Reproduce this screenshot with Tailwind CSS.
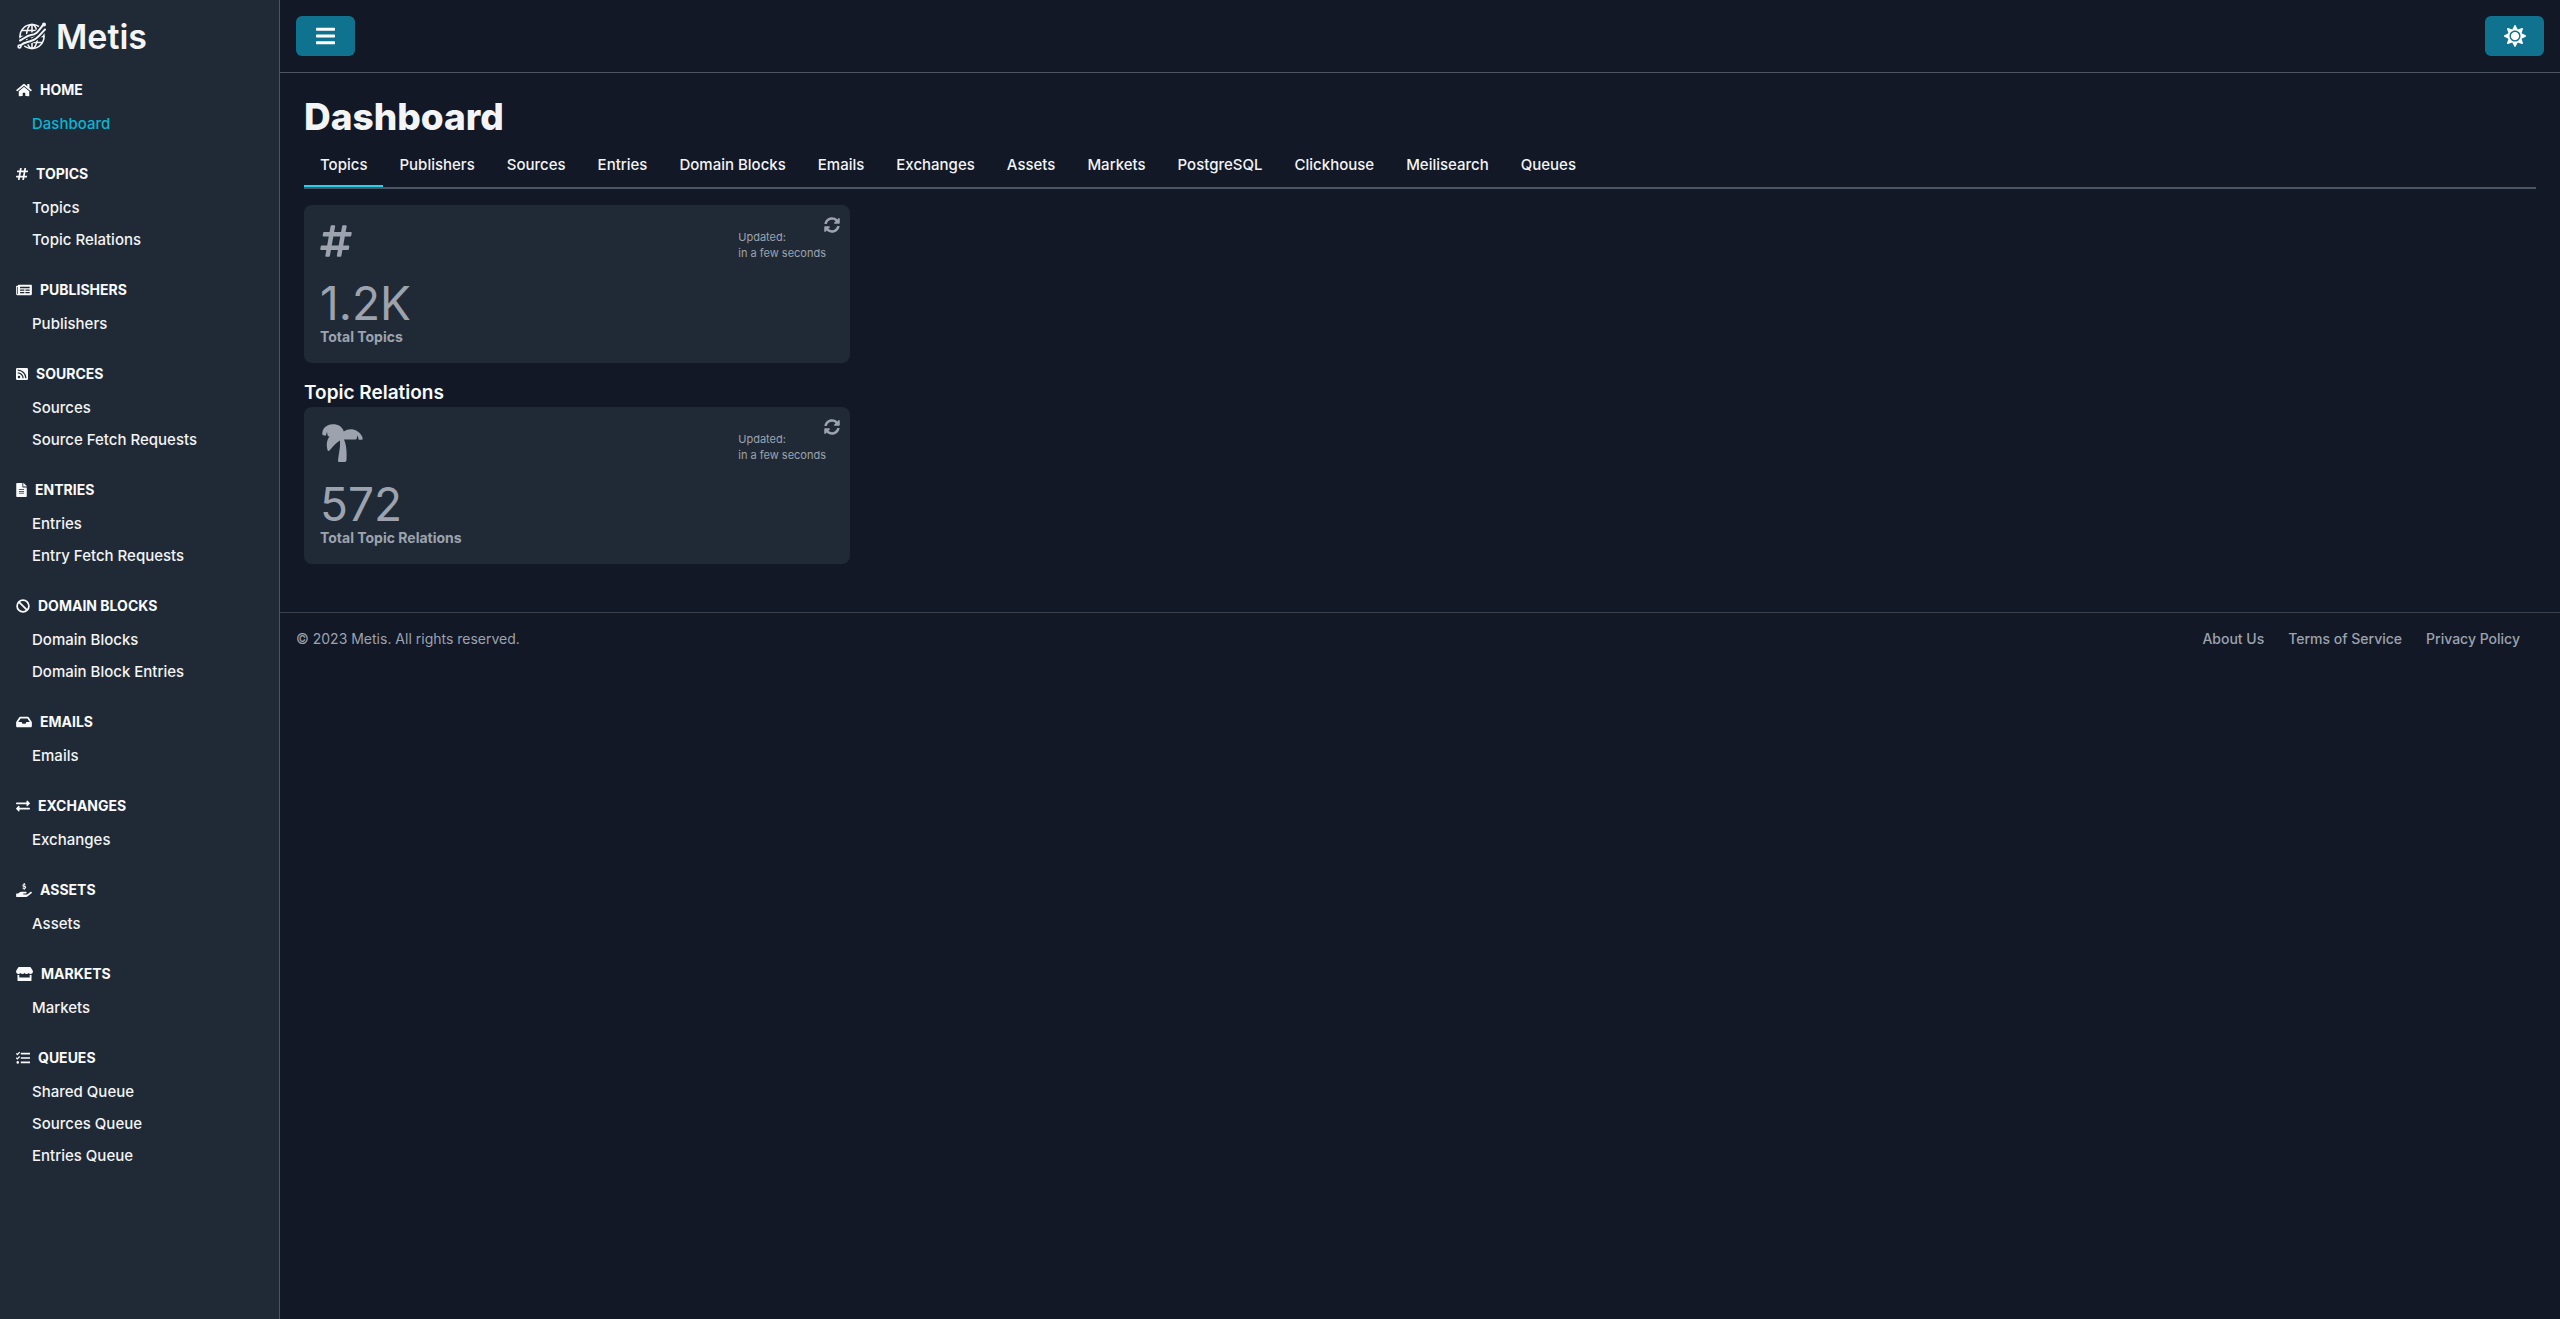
<!DOCTYPE html>
<html lang="en">
  <head>
    <meta charset="UTF-8">
    <meta name="viewport" content="width=device-width, initial-scale=1.0">
    <title>Metis - Dashboard</title>
    <script src="https://cdn.jsdelivr.net/npm/@tailwindcss/browser@4"></script>
  </head>
  <body class="flex min-h-screen bg-[#121826] font-['Inter',sans-serif] text-gray-100">
    <!-- Sidebar -->
    <aside class="w-70 shrink-0 border-r border-[#4b5563] bg-[#202a36] px-4 pt-3">
      <a href="#" class="flex h-12 items-center gap-2 text-[34px] font-semibold text-[#f3f4f6]">
        <svg class="h-7 w-8" viewBox="0 0 32 28" fill="none" stroke="currentColor" stroke-width="1.600" stroke-linecap="round" stroke-linejoin="round">
          <circle cx="16" cy="14.500" r="12"/>
          <ellipse cx="16" cy="14.500" rx="5.500" ry="12"/>
          <path d="M16 2.500V26.500M4 14.500H28M6 8.500H26M6 20.500H26"/>
          <!-- orbit bands, with a dark edge that cuts them out of the globe -->
          <path d="M4 19C8 15.500 11 13.500 15 13C21 12.500 23 8 27.500 2.500M4 24C8 20.500 12 20.500 16 18.500C21 17.500 24 12.500 29 7.500" stroke="#202a36" stroke-width="4.500"/>
          <path d="M4 18.500C8 16.500 11 13.500 15 13C21 12.500 23 8 27.500 2.500M4.500 23.500C8 20 12 20.500 16 18.500C21 17.500 24 12.500 29 7.500" stroke-width="2"/>
          <circle cx="28" cy="2.500" r="1.200" fill="currentColor"/>
          <circle cx="3.500" cy="24.500" r="1.400"/>
        </svg>
        <span>Metis</span>
      </a>

      <nav class="mt-5 flex flex-col gap-6">
        <section>
          <h2 class="flex h-5 items-center gap-2 text-sm font-bold text-gray-50">
            <svg class="h-3.5 w-4" viewBox="0 0 576 512" fill="currentColor"><path d="M280.370 148.260L96 300.110V464a16 16 0 0 0 16 16l112.060-.290a16 16 0 0 0 15.920-16V368a16 16 0 0 1 16-16h64a16 16 0 0 1 16 16v95.640a16 16 0 0 0 16 16.050L464 480a16 16 0 0 0 16-16V300L295.670 148.260a12.190 12.190 0 0 0-15.300 0zM571.600 251.470L488 182.560V44.050a12 12 0 0 0-12-12h-56a12 12 0 0 0-12 12v72.610L318.470 43a48 48 0 0 0-61 0L4.340 251.470a12 12 0 0 0-1.600 16.900l25.500 31A12 12 0 0 0 45.150 301l235.220-193.740a12.190 12.190 0 0 1 15.300 0L530.900 301a12 12 0 0 0 16.900-1.600l25.500-31a12 12 0 0 0-1.700-16.930z"/></svg>
            HOME
          </h2>
          <ul class="mt-2 pl-4 text-[15px] leading-8 font-medium">
            <li><a href="#" class="text-[#06b6d4]">Dashboard</a></li>
          </ul>
        </section>

        <section>
          <h2 class="flex h-5 items-center gap-2 text-sm font-bold text-gray-50">
            <svg class="h-3.5 w-3" viewBox="0 0 448 512" fill="currentColor"><path d="M440.667 182.109l7.143-40c1.313-7.355-4.342-14.109-11.813-14.109h-74.810l14.623-81.891C377.123 38.754 371.468 32 363.997 32h-40.632a12 12 0 0 0-11.813 9.891L296.175 128H197.540l14.623-81.891C213.477 38.754 207.822 32 200.350 32h-40.632a12 12 0 0 0-11.813 9.891L132.528 128H53.432a12 12 0 0 0-11.813 9.891l-7.143 40C33.163 185.246 38.818 192 46.289 192h74.810L98.242 320H19.146a12 12 0 0 0-11.813 9.891l-7.143 40C-1.123 377.246 4.532 384 12.003 384h74.810L72.190 465.891C70.877 473.246 76.532 480 84.003 480h40.632a12 12 0 0 0 11.813-9.891L151.826 384h98.634l-14.623 81.891C234.523 473.246 240.178 480 247.650 480h40.632a12 12 0 0 0 11.813-9.891L315.472 384h79.096a12 12 0 0 0 11.813-9.891l7.143-40c1.313-7.355-4.342-14.109-11.813-14.109h-74.810l22.857-128h79.096a12 12 0 0 0 11.813-9.891zM261.889 320h-98.634l22.857-128h98.634l-22.857 128z"/></svg>
            TOPICS
          </h2>
          <ul class="mt-2 pl-4 text-[15px] leading-8 font-medium">
            <li><a href="#">Topics</a></li>
            <li><a href="#">Topic Relations</a></li>
          </ul>
        </section>

        <section>
          <h2 class="flex h-5 items-center gap-2 text-sm font-bold text-gray-50">
            <svg class="h-3.5 w-4" viewBox="0 0 576 512" fill="currentColor" fill-rule="evenodd"><path d="M552 64H88a24 24 0 0 0-24 24v8H24a24 24 0 0 0-24 24v272a56 56 0 0 0 56 56h472a48 48 0 0 0 48-48V88a24 24 0 0 0-24-24zM40 400V144h24v256zM144 136H496V190H144zM144 236H300V280H144zM340 236H496V280H340zM144 330H300V374H144zM340 330H496V374H340z"/></svg>
            PUBLISHERS
          </h2>
          <ul class="mt-2 pl-4 text-[15px] leading-8 font-medium">
            <li><a href="#">Publishers</a></li>
          </ul>
        </section>

        <section>
          <h2 class="flex h-5 items-center gap-2 text-sm font-bold text-gray-50">
            <svg class="h-3.5 w-3" viewBox="0 0 448 512" fill="none" stroke-width="44">
              <rect y="32" width="448" height="448" rx="48" fill="currentColor"/>
              <circle cx="112" cy="368" r="46" fill="#202a36"/>
              <path d="M64 214A202 202 0 0 1 266 416M64 112A304 304 0 0 1 368 416" stroke="#202a36"/>
            </svg>
            SOURCES
          </h2>
          <ul class="mt-2 pl-4 text-[15px] leading-8 font-medium">
            <li><a href="#">Sources</a></li>
            <li><a href="#">Source Fetch Requests</a></li>
          </ul>
        </section>

        <section>
          <h2 class="flex h-5 items-center gap-2 text-sm font-bold text-gray-50">
            <svg class="h-3.5 w-[11px]" viewBox="0 0 384 512" fill="currentColor"><path d="M224 136V0H24C10.700 0 0 10.700 0 24v464c0 13.300 10.700 24 24 24h336c13.300 0 24-10.700 24-24V160H248c-13.200 0-24-10.800-24-24zm64 236c0 6.600-5.400 12-12 12H108c-6.600 0-12-5.400-12-12v-8c0-6.600 5.400-12 12-12h168c6.600 0 12 5.400 12 12v8zm0-64c0 6.600-5.400 12-12 12H108c-6.600 0-12-5.400-12-12v-8c0-6.600 5.400-12 12-12h168c6.600 0 12 5.400 12 12v8zm0-72v8c0 6.600-5.400 12-12 12H108c-6.600 0-12-5.400-12-12v-8c0-6.600 5.400-12 12-12h168c6.600 0 12 5.400 12 12zm96-114.100v6.100H256V0h6.100c6.400 0 12.500 2.500 17 7l97.900 98c4.500 4.500 7 10.600 7 16.900z"/></svg>
            ENTRIES
          </h2>
          <ul class="mt-2 pl-4 text-[15px] leading-8 font-medium">
            <li><a href="#">Entries</a></li>
            <li><a href="#">Entry Fetch Requests</a></li>
          </ul>
        </section>

        <section>
          <h2 class="flex h-5 items-center gap-2 text-sm font-bold text-gray-50">
            <svg class="size-3.5" viewBox="0 0 512 512" fill="none" stroke="currentColor" stroke-width="64"><circle cx="256" cy="256" r="216"/><path d="M103 103L409 409"/></svg>
            DOMAIN BLOCKS
          </h2>
          <ul class="mt-2 pl-4 text-[15px] leading-8 font-medium">
            <li><a href="#">Domain Blocks</a></li>
            <li><a href="#">Domain Block Entries</a></li>
          </ul>
        </section>

        <section>
          <h2 class="flex h-5 items-center gap-2 text-sm font-bold text-gray-50">
            <svg class="h-3.5 w-4" viewBox="0 0 576 512" fill="currentColor"><path d="M567.938 243.908L462.250 85.374A48.003 48.003 0 0 0 422.311 64H153.689a48 48 0 0 0-39.938 21.374L8.062 243.908A47.994 47.994 0 0 0 0 270.533V400c0 26.510 21.490 48 48 48h480c26.510 0 48-21.490 48-48V270.533a47.994 47.994 0 0 0-8.062-26.625zM162.252 128h251.497l85.333 128H376l-32 64H232l-32-64H76.918l85.334-128z"/></svg>
            EMAILS
          </h2>
          <ul class="mt-2 pl-4 text-[15px] leading-8 font-medium">
            <li><a href="#">Emails</a></li>
          </ul>
        </section>

        <section>
          <h2 class="flex h-5 items-center gap-2 text-sm font-bold text-gray-50">
            <svg class="size-3.5" viewBox="0 0 512 512" fill="currentColor"><path d="M0 168v-16c0-13.255 10.745-24 24-24h360V80c0-21.367 25.899-32.042 40.971-16.971l80 80c9.372 9.373 9.372 24.569 0 33.941l-80 80C409.956 271.982 384 261.456 384 240v-48H24c-13.255 0-24-10.745-24-24zm488 152H128v-48c0-21.314-25.862-32.080-40.971-16.971l-80 80c-9.372 9.373-9.372 24.569 0 33.941l80 80C102.057 463.997 128 453.437 128 432v-48h360c13.255 0 24-10.745 24-24v-16c0-13.255-10.745-24-24-24z"/></svg>
            EXCHANGES
          </h2>
          <ul class="mt-2 pl-4 text-[15px] leading-8 font-medium">
            <li><a href="#">Exchanges</a></li>
          </ul>
        </section>

        <section>
          <h2 class="flex h-5 items-center gap-2 text-sm font-bold text-gray-50">
            <svg class="h-3.5 w-4" viewBox="0 0 576 512" fill="currentColor">
              <path d="M565.300 328.100c-11.800-10.700-30.200-10-42.600 0L430.300 402c-11.300 9.100-25.400 14-40 14H272c-8.800 0-16-7.200-16-16s7.200-16 16-16h78.300c15.900 0 30.700-10.900 33.300-26.600 3.300-20-12.100-37.400-31.600-37.400H192c-27 0-53.100 9.300-74.100 26.300L71.400 384H16c-8.800 0-16 7.200-16 16v96c0 8.800 7.200 16 16 16h356.800c14.500 0 28.600-4.900 40-14L564 377c15.200-12.100 16.400-35.300 1.300-48.900z"/>
              <path d="M344 78C325 60 248 52 248 92C248 138 348 110 348 160C348 206 264 196 240 174M296 4V50M296 200V250" fill="none" stroke="currentColor" stroke-width="40"/>
            </svg>
            ASSETS
          </h2>
          <ul class="mt-2 pl-4 text-[15px] leading-8 font-medium">
            <li><a href="#">Assets</a></li>
          </ul>
        </section>

        <section>
          <h2 class="flex h-5 items-center gap-2 text-sm font-bold text-gray-50">
            <svg class="h-3.5 w-[17px]" viewBox="0 0 616 512" fill="currentColor"><path d="M84 8Q90 0 104 0H512Q526 0 532 8L602 116C640 178 600 256 530 256C498 256 472 244 456 222C438 244 412 256 382 256S326 244 308 222C290 244 264 256 234 256S178 244 160 222C144 244 118 256 86 256C16 256-24 178 14 116ZM52 284Q84 294 116 284V384H500V284Q532 294 564 284V480Q564 512 532 512H84Q52 512 52 480Z"/></svg>
            MARKETS
          </h2>
          <ul class="mt-2 pl-4 text-[15px] leading-8 font-medium">
            <li><a href="#">Markets</a></li>
          </ul>
        </section>

        <section>
          <h2 class="flex h-5 items-center gap-2 text-sm font-bold text-gray-50">
            <svg class="size-3.5" viewBox="0 0 512 512" fill="none" stroke="currentColor" stroke-width="56"><path d="M176 96H512M176 256H512M176 416H512"/><path d="M10 88L52 128L134 40M10 248L52 288L134 200" stroke-width="46"/><circle cx="64" cy="416" r="46" fill="currentColor" stroke="none"/></svg>
            QUEUES
          </h2>
          <ul class="mt-2 pl-4 text-[15px] leading-8 font-medium">
            <li><a href="#">Shared Queue</a></li>
            <li><a href="#">Sources Queue</a></li>
            <li><a href="#">Entries Queue</a></li>
          </ul>
        </section>
      </nav>
    </aside>

    <div class="min-w-0 flex-1">
      <!-- Top bar -->
      <header class="flex items-center justify-between border-b border-[#4b5563] p-4">
        <button type="button" aria-label="Toggle menu" class="flex h-10 items-center rounded-md bg-[#0f738f] px-5 text-white">
          <svg class="h-[22px] w-[19px]" viewBox="0 0 448 512" fill="currentColor"><rect y="60" width="448" height="72" rx="16"/><rect y="220" width="448" height="72" rx="16"/><rect y="380" width="448" height="72" rx="16"/></svg>
        </button>
        <button type="button" aria-label="Toggle theme" class="flex h-10 w-[59px] items-center justify-center rounded-md bg-[#0f738f] text-white">
          <svg class="size-[22px]" viewBox="0 0 512 512" fill="currentColor"><path d="M256 160c-52.900 0-96 43.100-96 96s43.100 96 96 96 96-43.100 96-96-43.100-96-96-96zm246.400 80.500l-94.700-47.300 33.500-100.400c4.500-13.600-8.400-26.500-21.900-21.900l-100.400 33.500-47.400-94.800c-6.400-12.800-24.600-12.800-31 0l-47.300 94.700L92.700 70.800c-13.600-4.500-26.500 8.400-21.900 21.900l33.500 100.400-94.700 47.400c-12.800 6.400-12.800 24.600 0 31l94.700 47.300-33.500 100.500c-4.500 13.600 8.400 26.500 21.900 21.900l100.400-33.500 47.300 94.700c6.400 12.800 24.600 12.800 31 0l47.300-94.700 100.400 33.500c13.600 4.500 26.500-8.400 21.900-21.900l-33.500-100.400 94.700-47.300c13-6.500 13-24.700.2-31.100zm-155.900 106c-49.900 49.900-131.100 49.900-181 0-49.900-49.900-49.900-131.100 0-181 49.900-49.900 131.100-49.900 181 0 49.900 49.900 49.900 131.100 0 181z"/></svg>
        </button>
      </header>

      <main class="px-6 pt-6 pb-12">
        <h1 class="text-[37px] leading-10 font-extrabold text-[#f3f4f6]">Dashboard</h1>

        <!-- Tabs -->
        <div role="tablist" class="mt-2 flex border-b-2 border-[#4b5563] text-[15px] font-medium text-gray-100">
          <button type="button" role="tab" aria-selected="true" class="h-[42px] border-b-2 border-[#22d3ee] px-4">Topics</button>
          <button type="button" role="tab" class="h-[42px] border-b-2 border-transparent px-4">Publishers</button>
          <button type="button" role="tab" class="h-[42px] border-b-2 border-transparent px-4">Sources</button>
          <button type="button" role="tab" class="h-[42px] border-b-2 border-transparent px-4">Entries</button>
          <button type="button" role="tab" class="h-[42px] border-b-2 border-transparent px-4">Domain Blocks</button>
          <button type="button" role="tab" class="h-[42px] border-b-2 border-transparent px-4">Emails</button>
          <button type="button" role="tab" class="h-[42px] border-b-2 border-transparent px-4">Exchanges</button>
          <button type="button" role="tab" class="h-[42px] border-b-2 border-transparent px-4">Assets</button>
          <button type="button" role="tab" class="h-[42px] border-b-2 border-transparent px-4">Markets</button>
          <button type="button" role="tab" class="h-[42px] border-b-2 border-transparent px-4">PostgreSQL</button>
          <button type="button" role="tab" class="h-[42px] border-b-2 border-transparent px-4">Clickhouse</button>
          <button type="button" role="tab" class="h-[42px] border-b-2 border-transparent px-4">Meilisearch</button>
          <button type="button" role="tab" class="h-[42px] border-b-2 border-transparent px-4">Queues</button>
        </div>

        <!-- Topics -->
        <div class="mt-4 grid grid-cols-4 gap-4">
          <div class="relative rounded-lg bg-[#202a36] p-4 text-[#9ca3af]">
            <button type="button" aria-label="Refresh" class="absolute top-3 right-2.5">
              <svg class="size-4" viewBox="0 0 512 512" fill="currentColor"><path d="M370.720 133.280C339.458 104.008 298.888 87.962 255.848 88c-77.458.068-144.328 53.178-162.791 126.850-1.344 5.363-6.122 9.150-11.651 9.150H24.103c-7.498 0-13.194-6.807-11.807-14.176C33.933 94.924 134.813 8 256 8c66.448 0 126.791 26.136 171.315 68.685L463.030 40.970C478.149 25.851 504 36.559 504 57.941V192c0 13.255-10.745 24-24 24H345.941c-21.382 0-32.090-25.851-16.971-40.971l41.750-41.749zM32 296h134.059c21.382 0 32.090 25.851 16.971 40.971l-41.750 41.750c31.262 29.273 71.835 45.319 114.876 45.280 77.418-.070 144.315-53.144 162.787-126.849 1.344-5.363 6.122-9.150 11.651-9.150h57.304c7.498 0 13.194 6.807 11.807 14.176C478.067 417.076 377.187 504 256 504c-66.448 0-126.791-26.136-171.315-68.685L48.970 471.030C33.851 486.149 8 475.441 8 454.059V320c0-13.255 10.745-24 24-24z"/></svg>
            </button>
            <div class="flex h-[58px] items-start justify-between pr-2">
              <svg class="mt-0.5 h-9 w-8" viewBox="0 0 448 512" fill="currentColor"><path d="M440.667 182.109l7.143-40c1.313-7.355-4.342-14.109-11.813-14.109h-74.810l14.623-81.891C377.123 38.754 371.468 32 363.997 32h-40.632a12 12 0 0 0-11.813 9.891L296.175 128H197.540l14.623-81.891C213.477 38.754 207.822 32 200.350 32h-40.632a12 12 0 0 0-11.813 9.891L132.528 128H53.432a12 12 0 0 0-11.813 9.891l-7.143 40C33.163 185.246 38.818 192 46.289 192h74.810L98.242 320H19.146a12 12 0 0 0-11.813 9.891l-7.143 40C-1.123 377.246 4.532 384 12.003 384h74.810L72.190 465.891C70.877 473.246 76.532 480 84.003 480h40.632a12 12 0 0 0 11.813-9.891L151.826 384h98.634l-14.623 81.891C234.523 473.246 240.178 480 247.650 480h40.632a12 12 0 0 0 11.813-9.891L315.472 384h79.096a12 12 0 0 0 11.813-9.891l7.143-40c1.313-7.355-4.342-14.109-11.813-14.109h-74.810l22.857-128h79.096a12 12 0 0 0 11.813-9.891zM261.889 320h-98.634l22.857-128h98.634l-22.857 128z"/></svg>
              <p class="mt-2 text-[11px] leading-4">Updated:<br>in a few seconds</p>
            </div>
            <p class="text-[46px] leading-12">1.2K</p>
            <p class="text-sm font-bold">Total Topics</p>
          </div>
        </div>

        <!-- Topic relations -->
        <h2 class="mt-4 text-[19px] leading-7 font-semibold text-gray-50">Topic Relations</h2>
        <div class="grid grid-cols-4 gap-4">
          <div class="relative rounded-lg bg-[#202a36] p-4 text-[#9ca3af]">
            <button type="button" aria-label="Refresh" class="absolute top-3 right-2.5">
              <svg class="size-4" viewBox="0 0 512 512" fill="currentColor"><path d="M370.720 133.280C339.458 104.008 298.888 87.962 255.848 88c-77.458.068-144.328 53.178-162.791 126.850-1.344 5.363-6.122 9.150-11.651 9.150H24.103c-7.498 0-13.194-6.807-11.807-14.176C33.933 94.924 134.813 8 256 8c66.448 0 126.791 26.136 171.315 68.685L463.030 40.970C478.149 25.851 504 36.559 504 57.941V192c0 13.255-10.745 24-24 24H345.941c-21.382 0-32.090-25.851-16.971-40.971l41.750-41.749zM32 296h134.059c21.382 0 32.090 25.851 16.971 40.971l-41.750 41.750c31.262 29.273 71.835 45.319 114.876 45.280 77.418-.070 144.315-53.144 162.787-126.849 1.344-5.363 6.122-9.150 11.651-9.150h57.304c7.498 0 13.194 6.807 11.807 14.176C478.067 417.076 377.187 504 256 504c-66.448 0-126.791-26.136-171.315-68.685L48.970 471.030C33.851 486.149 8 475.441 8 454.059V320c0-13.255 10.745-24 24-24z"/></svg>
            </button>
            <div class="flex h-[57px] items-start justify-between pr-2">
              <svg class="h-10 w-11" viewBox="0 0 44 40" fill="currentColor"><path d="M18 37.500C18.500 31 20.500 25 20 17.500C16 19.500 12.500 24 9.500 27.500C8.500 28.500 7.800 28 7.500 27C6.300 22 6.500 17.500 9.500 13.500L8 13.200C7.300 11.500 7 10 7.200 8.800C6.500 10 6.200 11.500 6 12.500C4.500 12.800 3 12.300 2.300 11.500C1.800 5 7 1.500 12.500 1.200C18 1 22.500 3.500 23.800 8.500C28 5.500 33 5.500 37 8C40.500 10 42.500 13 42.800 16.200C41.500 17 40 17 38.500 16.500C38.500 15 38 13.500 37 12.500C37.200 14 37 15.500 36 16.500H24C26.500 22 27 30 26.500 37C26.300 38.500 25.500 39 24.500 39H19.500C18.500 39 18 38.500 18 37.500Z"/></svg>
              <p class="mt-2 text-[11px] leading-4">Updated:<br>in a few seconds</p>
            </div>
            <p class="text-[46px] leading-12">572</p>
            <p class="text-sm font-bold">Total Topic Relations</p>
          </div>
        </div>
      </main>

      <footer class="flex items-center justify-between border-t border-[#374151] py-4 pr-10 pl-4 text-sm text-[#9ca3af]">
        <p>© 2023 Metis. All rights reserved.</p>
        <div class="flex gap-6 font-medium">
          <a href="#">About Us</a>
          <a href="#">Terms of Service</a>
          <a href="#">Privacy Policy</a>
        </div>
      </footer>
    </div>
  </body>
</html>
